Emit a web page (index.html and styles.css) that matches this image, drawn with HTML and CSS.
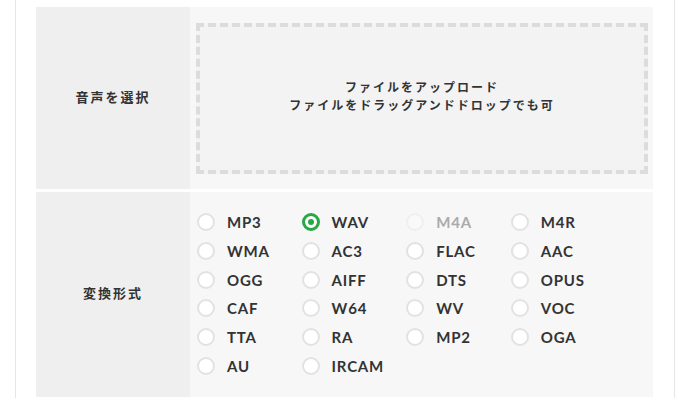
FILE: index.html
```html
<!DOCTYPE html>
<html lang="ja">
<head>
    <meta charset="UTF-8">
    <title>音声変換</title>
    <meta name="viewport" content="width=device-width, initial-scale=1.0">
    <link rel="stylesheet" href="styles.css">
</head>
<body>

    <div class="page">
        <!-- 音声ファイル -->
        <div class="form-row">
            <div class="form-label">音声を選択</div>
            <div class="form-field upload-field">
                <div class="drop-zone">
                    <p>ファイルをアップロード<br>ファイルをドラッグアンドドロップでも可</p>
                </div>
            </div>
        </div>
        <!-- 変換形式 -->
        <div class="form-row">
            <div class="form-label">変換形式</div>
            <div class="form-field format-field">
                <div class="format-list">
                    <label class="format"><span class="radio"></span>MP3</label>
                    <label class="format"><span class="radio checked"></span>WAV</label>
                    <label class="format disabled"><span class="radio"></span>M4A</label>
                    <label class="format"><span class="radio"></span>M4R</label>
                    <label class="format"><span class="radio"></span>WMA</label>
                    <label class="format"><span class="radio"></span>AC3</label>
                    <label class="format"><span class="radio"></span>FLAC</label>
                    <label class="format"><span class="radio"></span>AAC</label>
                    <label class="format"><span class="radio"></span>OGG</label>
                    <label class="format"><span class="radio"></span>AIFF</label>
                    <label class="format"><span class="radio"></span>DTS</label>
                    <label class="format"><span class="radio"></span>OPUS</label>
                    <label class="format"><span class="radio"></span>CAF</label>
                    <label class="format"><span class="radio"></span>W64</label>
                    <label class="format"><span class="radio"></span>WV</label>
                    <label class="format"><span class="radio"></span>VOC</label>
                    <label class="format"><span class="radio"></span>TTA</label>
                    <label class="format"><span class="radio"></span>RA</label>
                    <label class="format"><span class="radio"></span>MP2</label>
                    <label class="format"><span class="radio"></span>OGA</label>
                    <label class="format"><span class="radio"></span>AU</label>
                    <label class="format"><span class="radio"></span>IRCAM</label>
                </div>
            </div>
        </div>
    </div>

</body>
</html>
```

FILE: styles.css
```css
html, body {
  margin: 0; padding: 0; background: #fff; color: #333;
  font-family: "Noto Sans CJK JP", "Noto Sans", sans-serif;
}
.page {
  width: 660px; box-sizing: border-box; margin-left: 15px; height: 398px; padding: 7px 21px 0 20px;
  border-left: 1px solid #e6e6e6; border-right: 1px solid #e6e6e6;
}
.form-row { display: grid; grid-template-columns: 154px 1fr; margin-bottom: 3px; }
.form-label {
  background: #efefef; display: flex; align-items: center; justify-content: center; padding-bottom: 4px;
  font-size: 13px; font-weight: 700; letter-spacing: 2px;
}
.form-field { background: #f7f7f7; }
.upload-field { padding: 16px 5px 15px 6px; }
.drop-zone {
  height: 143px; border: 4px dashed #dcdcdc; background: #f3f3f3;
  display: flex; align-items: center; justify-content: center; text-align: center;
}
.drop-zone p { margin: -6px 0 0; font-size: 12px; font-weight: 700; line-height: 18px; letter-spacing: 2px; }
.format-field { padding: 16px 6px 17px 6px; }
.format-list { display: grid; grid-template-columns: repeat(4, 104.6px); grid-auto-rows: 28.7px; }
.format {
  display: flex; align-items: center; padding-left: 1px;
  font-family: Lato, "Noto Sans", sans-serif; font-size: 15px; font-weight: 700; letter-spacing: 0.8px;
}
.radio {
  width: 14px; height: 14px; border: 2px solid #e2e2e2; border-radius: 50%;
  background: #fff; margin-right: 12px; box-sizing: content-box; position: relative;
}
.radio.checked { border: 3px solid #27a844; width: 12px; height: 12px; }
.radio.checked::after {
  content: ""; position: absolute; left: 3px; top: 3px; width: 6px; height: 6px;
  border-radius: 50%; background: #27a844;
}
.format.disabled { color: #aaa; }
.format.disabled .radio { border-color: #efefef; background: #f9f9f9; }
```
